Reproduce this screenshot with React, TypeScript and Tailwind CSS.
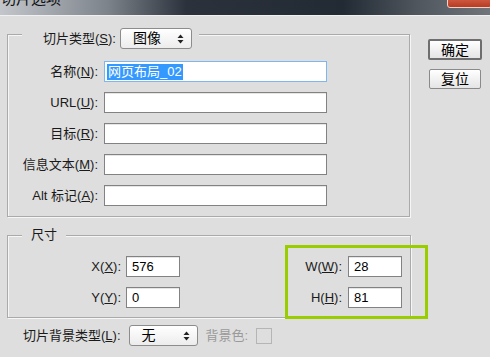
import React from 'react';

const font = "font-['Liberation_Sans','Noto_Sans_CJK_SC',sans-serif]";

const Key: React.FC<{ k: string }> = ({ k }) => <span className="underline underline-offset-[1px]">{k}</span>;

const Arrows: React.FC = () => (
    <svg width="7" height="10" viewBox="0 0 7 10" className="shrink-0">
        <path d="M3.5 0.5 L6.5 4 L0.5 4 Z" fill="#222" />
        <path d="M3.5 9.5 L6.5 6 L0.5 6 Z" fill="#222" />
    </svg>
);

const Select: React.FC<{ value: string; w: string }> = ({ value, w }) => (
    <div
        className={`${w} h-[21px] flex items-center justify-between pl-[12px] pr-[7px] rounded-[3px] border border-[#8c8c8c] bg-gradient-to-b from-white to-[#ececec] text-[14px] text-black`}
    >
        <span>{value}</span>
        <Arrows />
    </div>
);

const Field: React.FC<{ value?: string; w: string }> = ({ value, w }) => (
    <div
        className={`${w} h-[21px] flex items-center px-[5px] border border-[#828282] bg-white shadow-[inset_0_1px_0_#e6e6e6] text-[13px] text-black`}
    >
        {value}
    </div>
);

const rows = [
    { label: '名称', k: 'N', focus: true },
    { label: 'URL', k: 'U' },
    { label: '目标', k: 'R' },
    { label: '信息文本', k: 'M' },
    { label: 'Alt 标记', k: 'A' },
];

export default function App() {
    return (
        <div className={`w-[490px] h-[357px] overflow-hidden bg-[#dedede] ${font} text-[13px] text-[#1a1a1a]`}>
            {/* title bar */}
            <div className="relative h-[16px] overflow-hidden border-b border-[#f0f0f0] bg-[linear-gradient(90deg,#c3c7cc_0%,#7d838b_22%,#2b323b_38%,#222a33_70%,#4f565e_85%,#70757b_100%)]">
                <div className="-mt-[10px] pl-[1px] text-[15px] leading-[18px] text-[#111]">切片选项</div>
                <div className="absolute right-[-2px] top-[-8px] w-[45px] h-[16px] rounded-[3px] border border-[#f3d0c8] bg-gradient-to-b from-[#e0735a] to-[#b83a22]" />
            </div>

            <div className="flex pl-[7px]">
                {/* left column */}
                <div className="w-[403px]">
                    {/* slice options box */}
                    <div className="mt-[18px] h-[183px] border border-[#aaaaaa] shadow-[1px_1px_0_#f6f6f6,inset_1px_1px_0_#f6f6f6]">
                        <div className="-mt-[7px] ml-[14px] w-fit flex items-center gap-[4px] pl-[21px] pr-[7px] bg-[#dedede]">
                            <span>
                                切片类型(<Key k="S" />):
                            </span>
                            <Select value="图像" w="w-[72px]" />
                        </div>
                        <div className="mt-[12px] flex flex-col gap-[10px]">
                            {rows.map((r) => (
                                <div key={r.k} className="flex items-center">
                                    <div className="w-[90px] text-right whitespace-nowrap">
                                        {r.label}(<Key k={r.k} />):
                                    </div>
                                    <div className="ml-[6px]">
                                        {r.focus ? (
                                            <div className="w-[223px] h-[21px] flex items-center px-[2px] border border-[#7fb6ee] bg-white text-[13px]">
                                                <span className="bg-[#3399ff] text-white px-[1px] leading-[16px]">网页布局_02</span>
                                            </div>
                                        ) : (
                                            <Field w="w-[223px]" />
                                        )}
                                    </div>
                                </div>
                            ))}
                        </div>
                    </div>

                    {/* dimensions box */}
                    <div className="relative mt-[18px] h-[83px] w-[404px] border border-[#aaaaaa] shadow-[1px_1px_0_#f6f6f6,inset_1px_1px_0_#f6f6f6]">
                        <div className="-mt-[8px] ml-[14px] w-fit px-[9px] bg-[#dedede] leading-[14px] text-[13px]">尺寸</div>
                        <div className="mt-[14px] flex justify-between pr-[8px]">
                            <div className="flex flex-col gap-[10px]">
                                {[
                                    ['X', '576'],
                                    ['Y', '0'],
                                ].map(([k, v]) => (
                                    <div key={k} className="flex items-center">
                                        <div className="w-[113px] text-right">
                                            {k}(<Key k={k} />):
                                        </div>
                                        <div className="ml-[5px]">
                                            <Field value={v} w="w-[54px]" />
                                        </div>
                                    </div>
                                ))}
                            </div>
                            <div className="flex flex-col gap-[10px]">
                                {[
                                    ['W', '28'],
                                    ['H', '81'],
                                ].map(([k, v]) => (
                                    <div key={k} className="flex items-center">
                                        <div className="w-[50px] text-right">
                                            {k}(<Key k={k} />):
                                        </div>
                                        <div className="ml-[6px]">
                                            <Field value={v} w="w-[54px]" />
                                        </div>
                                    </div>
                                ))}
                            </div>
                        </div>
                        {/* highlight annotation */}
                        <div className="absolute left-[277px] top-[9px] w-[143px] h-[74px] border-[3px] border-[#9acd00]" />
                    </div>

                    {/* background row */}
                    <div className="mt-[7px] flex items-center">
                        <span className="ml-[16px] whitespace-nowrap">
                            切片背景类型(<Key k="L" />):
                        </span>
                        <div className="ml-[8px]">
                            <Select value="无" w="w-[69px]" />
                        </div>
                        <span className="ml-[8px] text-[#9a9a9a]">背景色:</span>
                        <div className="ml-[8px] w-[16px] h-[16px] border border-[#b5b5b5] bg-[#dedede]" />
                    </div>
                </div>

                {/* buttons */}
                <div className="ml-[18px] mt-[23px] flex flex-col items-start gap-[9px]">
                    <button className="w-[54px] h-[21px] rounded-[2px] border-2 border-[#6e6e6e] bg-gradient-to-b from-white to-[#e4e4e4] text-[14px] leading-none text-black">
                        确定
                    </button>
                    <button className="ml-[1px] w-[52px] h-[20px] rounded-[2px] border border-[#8a8a8a] bg-gradient-to-b from-white to-[#e4e4e4] text-[14px] leading-none text-black">
                        复位
                    </button>
                </div>
            </div>
        </div>
    );
}
